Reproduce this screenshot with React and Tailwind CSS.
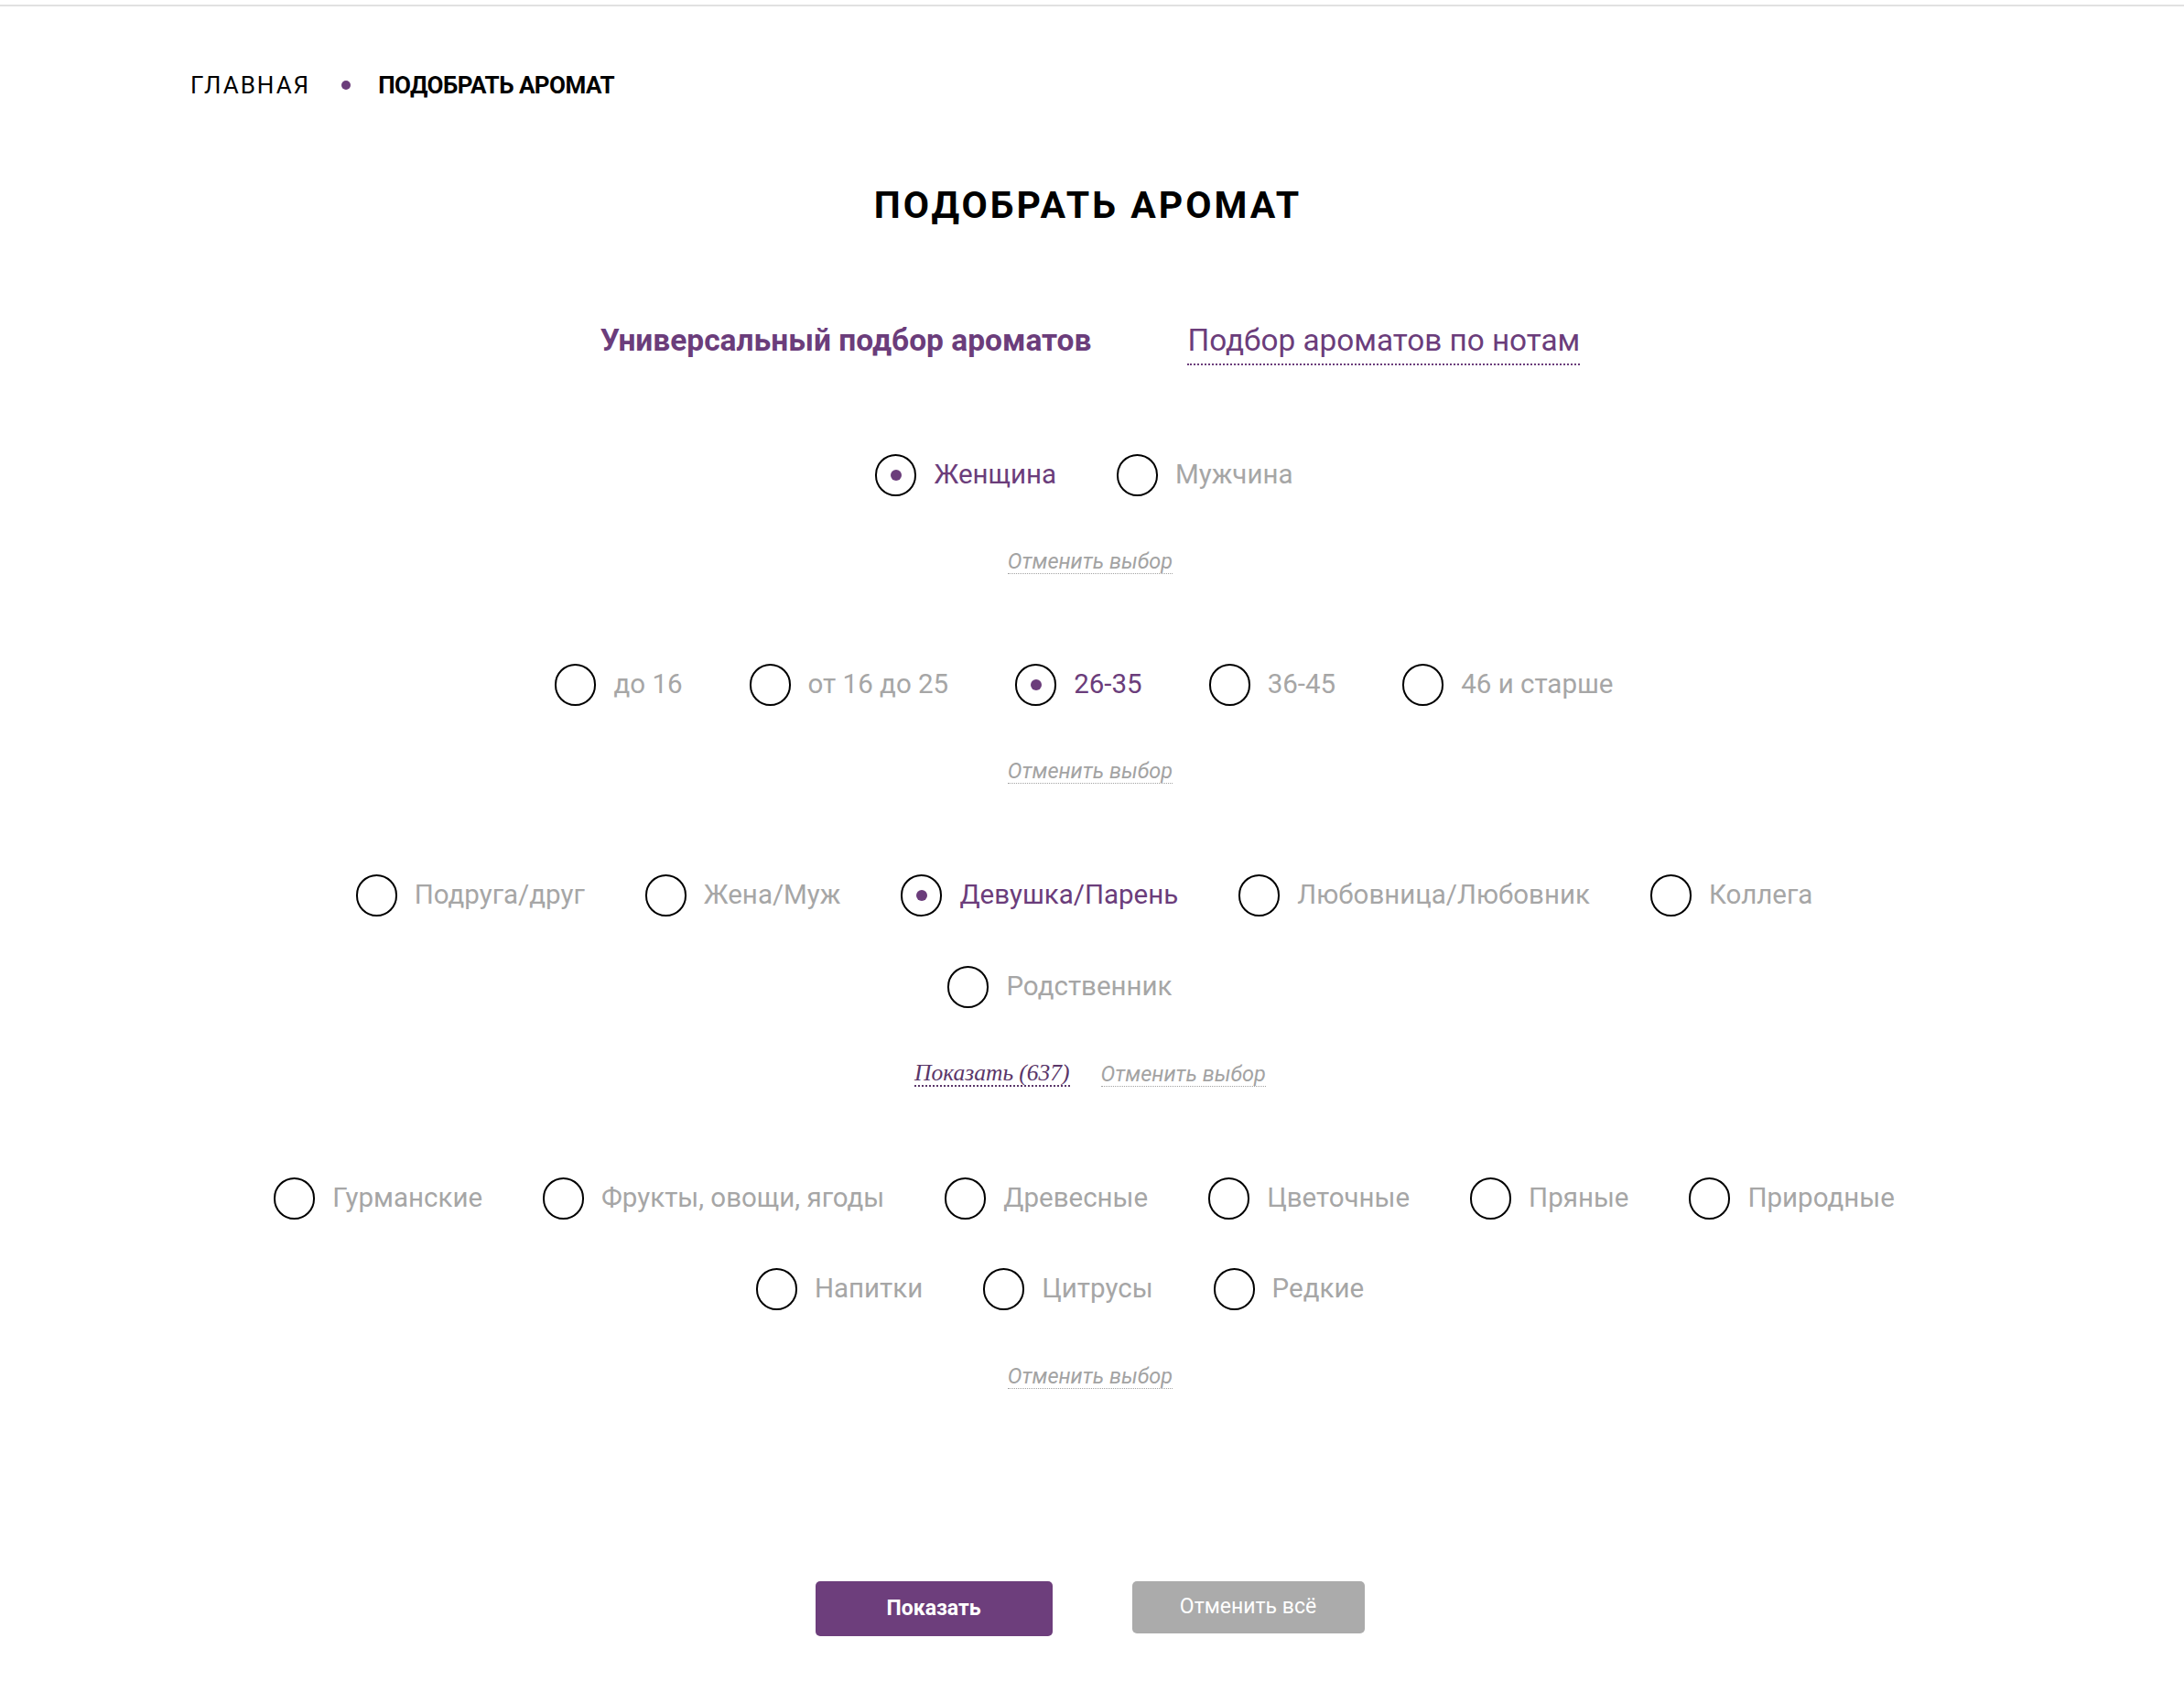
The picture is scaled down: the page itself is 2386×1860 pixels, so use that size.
import { useState } from "react";

const purple = "text-[#6b3d7b]";

function Radio({ label, checked, onClick }) {
    return (
        <button type="button" onClick={onClick} className="flex items-center h-[46px] cursor-pointer">
            <span className="w-[45px] h-[46px] rounded-full border-2 border-black flex items-center justify-center shrink-0">
                {checked && <span className="w-[12px] h-[12px] rounded-full bg-[#6b3d7b]"></span>}
            </span>
            <span className={`ml-[19px] text-[29.5px] leading-none whitespace-nowrap ${checked ? purple : "text-[#a6a6a6]"}`}>
                {label}
            </span>
        </button>
    );
}

// first line of a group sits a little left of centre, a wrapped line even more
function RadioRow({ items, value, setValue, wrapped, gap = "gap-[66px]" }) {
    return (
        <div className={`flex justify-center ${gap} ${wrapped ? "pr-[70px]" : "pr-[17px]"}`}>
            {items.map((item) =>
                <Radio key={item} label={item} checked={value === item} onClick={() => setValue(item)} />
            )}
        </div>
    );
}

function Cancel({ onClick }) {
    return (
        <button type="button" onClick={onClick}
            className="italic text-[23.5px] leading-[26px] text-[#a3a3a3] border-b border-dotted border-[#a3a3a3] cursor-pointer">
            Отменить выбор
        </button>
    );
}

function App() {
    const [gender, setGender] = useState('Женщина');
    const [age, setAge] = useState('26-35');
    const [who, setWho] = useState('Девушка/Парень');
    const [note, setNote] = useState('');

    const resetAll = () => {
        setGender('');
        setAge('');
        setWho('');
        setNote('');
    }

    return (
        <div className="min-h-screen bg-white font-['Roboto','Noto_Sans',sans-serif] text-black">
            <div className="pt-[5px]">
                <div className="h-[2px] bg-[#e1e1e1]"></div>
            </div>

            {/* breadcrumbs */}
            <div className="flex items-center pl-[208px] mt-[68px] h-[36px] text-[26px]">
                <span className="tracking-[2px]">ГЛАВНАЯ</span>
                <span className="w-[10px] h-[10px] rounded-full bg-[#6b3d7b] ml-[34px] mr-[30px]"></span>
                <span className="font-bold tracking-[-0.5px]">ПОДОБРАТЬ АРОМАТ</span>
            </div>

            <h1 className="text-center font-bold text-[41px] leading-[50px] tracking-[3px] mt-[88px] pr-[9px]">
                ПОДОБРАТЬ АРОМАТ
            </h1>

            {/* tabs */}
            <div className="flex justify-center items-start gap-[105px] mt-[101px] leading-[44px] pr-[4px]">
                <span className={`font-bold text-[33.5px] ${purple}`}>Универсальный подбор ароматов</span>
                <span className={`text-[33.3px] ${purple} border-b-2 border-dotted border-[#6b3d7b] pb-[3px]`}>Подбор ароматов по нотам</span>
            </div>

            {/* gender */}
            <div className="mt-[97px]">
                <RadioRow items={['Женщина', 'Мужчина']} value={gender} setValue={setGender} />
            </div>
            <div className="flex justify-center mt-[58px] pr-[4px]">
                <Cancel onClick={() => setGender('')} />
            </div>

            {/* age */}
            <div className="mt-[98px]">
                <RadioRow gap="gap-[73px]" items={['до 16', 'от 16 до 25', '26-35', '36-45', '46 и старше']} value={age} setValue={setAge} />
            </div>
            <div className="flex justify-center mt-[58px] pr-[4px]">
                <Cancel onClick={() => setAge('')} />
            </div>

            {/* relation */}
            <div className="mt-[99px] flex flex-col gap-[54px]">
                <RadioRow items={['Подруга/друг', 'Жена/Муж', 'Девушка/Парень', 'Любовница/Любовник', 'Коллега']} value={who} setValue={setWho} />
                <RadioRow wrapped items={['Родственник']} value={who} setValue={setWho} />
            </div>
            <div className="flex justify-center items-end gap-[34px] mt-[57px] pr-[4px]">
                <button type="button"
                    className="italic font-['Liberation_Serif','DejaVu_Serif',serif] text-[25.5px] leading-[27px] text-[#5a3669] border-b-2 border-dotted border-[#5a3669] cursor-pointer">
                    Показать (637)
                </button>
                <Cancel onClick={() => setWho('')} />
            </div>

            {/* notes */}
            <div className="mt-[99px] flex flex-col gap-[53px]">
                <RadioRow items={['Гурманские', 'Фрукты, овощи, ягоды', 'Древесные', 'Цветочные', 'Пряные', 'Природные']} value={note} setValue={setNote} />
                <RadioRow wrapped items={['Напитки', 'Цитрусы', 'Редкие']} value={note} setValue={setNote} />
            </div>
            <div className="flex justify-center mt-[59px] pr-[4px]">
                <Cancel onClick={() => setNote('')} />
            </div>

            {/* buttons */}
            <div className="flex justify-center items-start gap-[87px] mt-[210px] pb-[74px] pr-[5px]">
                <button type="button" className="w-[259px] h-[60px] rounded-[5px] bg-[#6d3e7c] text-white font-bold text-[23px] cursor-pointer">
                    Показать
                </button>
                <button type="button" onClick={resetAll} className="w-[254px] h-[57px] rounded-[5px] bg-[#ababab] text-white text-[23px] cursor-pointer">
                    Отменить всё
                </button>
            </div>
        </div>
    );
}

export default App;
